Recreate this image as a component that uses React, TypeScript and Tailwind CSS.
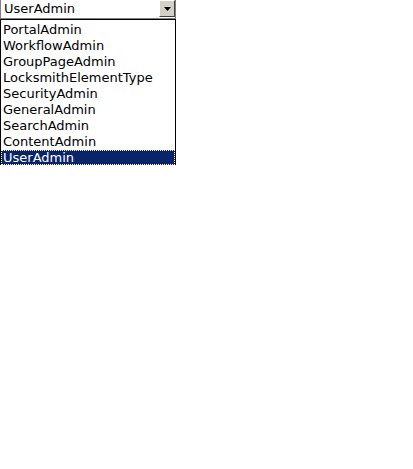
import React from "react";

const items = [
  "PortalAdmin",
  "WorkflowAdmin",
  "GroupPageAdmin",
  "LocksmithElementType",
  "SecurityAdmin",
  "GeneralAdmin",
  "SearchAdmin",
  "ContentAdmin",
  "UserAdmin",
];

export default function App() {
  return (
    <div className="w-[413px] h-[469px] bg-white" style={{ fontFamily: '"DejaVu Sans", Verdana, sans-serif' }}>
      <div className="w-[176px]">
        <div className="h-[19px] flex items-stretch border-l border-b border-r border-[#808080] bg-white">
          <div className="flex-1 text-[13px] leading-[18px] pl-[3px] text-black">UserAdmin</div>
          <div className="w-[16px] h-[17px] bg-[#d4d0c8] border-t border-l border-white border-r border-b border-r-[#404040] border-b-[#404040] flex items-center justify-center">
            <svg width="7" height="4" viewBox="0 0 7 4">
              <polygon points="0,0 7,0 3.5,4" fill="#000" />
            </svg>
          </div>
        </div>
        <div className="border border-black bg-white pt-[2px] h-[146px]">
          {items.map((it) => {
            const sel = it === "UserAdmin";
            return (
              <div
                key={it}
                className={
                  sel
                    ? "h-[15px] text-[13px] leading-[13px] pl-[1px] bg-[#0a246a] text-white border border-dotted border-[#ffffcc]"
                    : "h-[16px] text-[13px] leading-[16px] pl-[2px] text-black"
                }
              >
                {it}
              </div>
            );
          })}
        </div>
      </div>
    </div>
  );
}
